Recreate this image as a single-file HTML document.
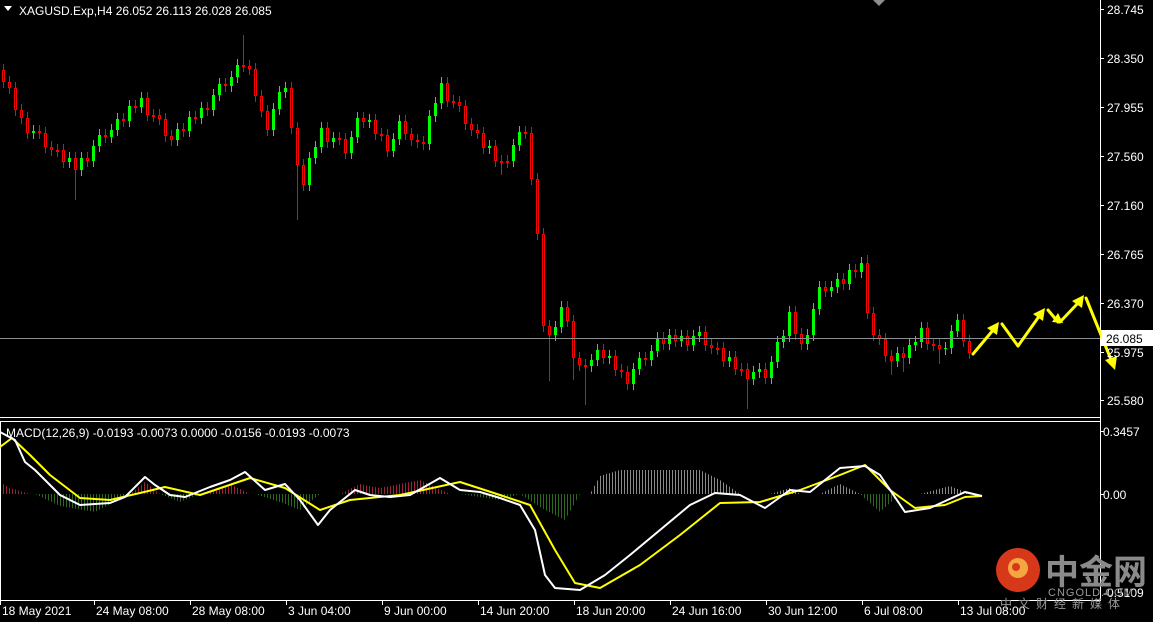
<!DOCTYPE html>
<html><head><meta charset="utf-8"><style>
html,body{margin:0;padding:0;background:#000;width:1153px;height:622px;overflow:hidden}
svg{display:block}
text{font-family:"Liberation Sans",sans-serif;font-size:12px;fill:#fff}
</style></head><body>
<svg width="1153" height="622" viewBox="0 0 1153 622" xmlns="http://www.w3.org/2000/svg">
<defs>
<pattern id="pr" width="3" height="10" patternUnits="userSpaceOnUse"><rect width="1" height="10" fill="#a0223a"/></pattern>
<pattern id="pg" width="3" height="10" patternUnits="userSpaceOnUse"><rect width="1" height="10" fill="#2a6a1a"/></pattern>
<pattern id="pw" width="3" height="10" patternUnits="userSpaceOnUse"><rect width="1" height="10" fill="#8a8a8a"/></pattern>
</defs>
<rect width="1153" height="622" fill="#000"/>
<!-- histogram -->
<g>
<polygon fill="url(#pr)" points="3,494 3,484 10,488 30,494"/>
<polygon fill="url(#pr)" points="130,494 145,482 160,494"/>
<polygon fill="url(#pr)" points="200,494 230,484 250,494"/>
<polygon fill="url(#pr)" points="340,494 360,484 380,488 420,480 450,494"/>
<polygon fill="url(#pw)" points="590,494 600,476 620,470 700,470 720,480 740,494"/>
<polygon fill="url(#pw)" points="920,494 950,486 970,494"/>
<polygon fill="url(#pw)" points="770,494 790,488 800,494"/>
<polygon fill="url(#pw)" points="820,494 840,484 860,494"/>
<polygon fill="url(#pg)" points="35,494 60,506 95,512 130,494"/>
<polygon fill="url(#pg)" points="160,494 180,502 200,494"/>
<polygon fill="url(#pg)" points="255,494 280,502 300,510 320,494"/>
<polygon fill="url(#pg)" points="460,494 500,500 520,494"/>
<polygon fill="url(#pg)" points="520,494 545,510 565,520 580,494"/>
<polygon fill="url(#pg)" points="860,494 880,512 900,494"/>
</g>
<!-- green candles -->
<path stroke="#00ff00" stroke-width="1" fill="none" d="M33.5 125V139M69.5 152V168M81.5 152V176M93.5 140V167M99.5 129V152M111.5 124V143M117.5 113V136M129.5 100V127M141.5 92V113M177.5 123V146M189.5 111V137M201.5 102V124M213.5 89V116M219.5 78V101M231.5 71V92M237.5 59V83M273.5 103V136M279.5 86V115M285.5 82V98M309.5 152V191M315.5 141V164M321.5 122V153M333.5 132V148M351.5 131V159M357.5 112V143M369.5 114V128M393.5 133V157M399.5 115V145M429.5 110V150M435.5 97V122M441.5 77V109M489.5 140V154M513.5 139V167M519.5 126V151M555.5 321V341M561.5 301V333M591.5 354V372M597.5 344V366M609.5 350V364M633.5 363V390M639.5 352V375M651.5 345V366M657.5 332V357M669.5 329V350M681.5 330V347M693.5 330V351M699.5 326V342M729.5 351V367M753.5 366V385M759.5 363V378M771.5 356V384M777.5 336V368M783.5 330V348M789.5 306V342M807.5 329V350M813.5 303V341M819.5 281V315M831.5 281V297M837.5 273V293M849.5 264V290M861.5 257V278M897.5 347V367M909.5 339V364M915.5 336V351M921.5 322V348M945.5 342V355M951.5 325V354M957.5 314V337"/>
<path fill="#00ff00" d="M32 131h3v2h-3zM68 158h3v4h-3zM80 158h3v12h-3zM92 146h3v15h-3zM98 135h3v11h-3zM110 130h3v7h-3zM116 119h3v11h-3zM128 106h3v15h-3zM140 98h3v9h-3zM176 129h3v11h-3zM188 117h3v14h-3zM200 108h3v10h-3zM212 95h3v15h-3zM218 84h3v11h-3zM230 77h3v9h-3zM236 65h3v12h-3zM272 109h3v21h-3zM278 92h3v17h-3zM284 88h3v4h-3zM308 158h3v27h-3zM314 147h3v11h-3zM320 128h3v19h-3zM332 138h3v4h-3zM350 137h3v16h-3zM356 118h3v19h-3zM368 120h3v2h-3zM392 139h3v12h-3zM398 121h3v18h-3zM428 116h3v28h-3zM434 103h3v13h-3zM440 83h3v20h-3zM488 146h3v2h-3zM512 145h3v16h-3zM518 132h3v13h-3zM554 327h3v8h-3zM560 307h3v20h-3zM590 360h3v6h-3zM596 350h3v10h-3zM608 356h3v2h-3zM632 369h3v15h-3zM638 358h3v11h-3zM650 351h3v9h-3zM656 338h3v13h-3zM668 335h3v9h-3zM680 336h3v5h-3zM692 336h3v9h-3zM698 332h3v4h-3zM728 357h3v4h-3zM752 372h3v7h-3zM758 369h3v3h-3zM770 362h3v16h-3zM776 342h3v20h-3zM782 336h3v6h-3zM788 312h3v24h-3zM806 335h3v9h-3zM812 309h3v26h-3zM818 287h3v22h-3zM830 287h3v4h-3zM836 279h3v8h-3zM848 270h3v14h-3zM860 263h3v9h-3zM896 353h3v8h-3zM908 345h3v13h-3zM914 342h3v3h-3zM920 328h3v14h-3zM944 348h3v1h-3zM950 331h3v17h-3zM956 320h3v11h-3z"/>
<!-- red candles -->
<path stroke="#ff0000" stroke-width="1" fill="none" d="M3.5 64V88M9.5 76V94M15.5 82V116M21.5 104V124M27.5 112V139M39.5 125V139M45.5 127V153M51.5 141V156M57.5 144V157M63.5 144V168M75.5 152V200M87.5 152V167M105.5 129V143M123.5 113V127M135.5 100V113M147.5 92V121M153.5 109V122M159.5 109V125M165.5 113V142M171.5 130V146M183.5 123V137M195.5 111V124M207.5 102V116M225.5 78V92M243.5 35V72M249.5 60V75M255.5 63V102M261.5 90V117M267.5 105V136M291.5 82V134M297.5 122V220M303.5 159V191M327.5 122V148M339.5 132V145M345.5 133V159M363.5 112V128M375.5 114V140M381.5 128V141M387.5 129V157M405.5 115V140M411.5 128V146M417.5 134V148M423.5 136V150M447.5 77V107M453.5 95V108M459.5 96V112M465.5 100V130M471.5 118V136M477.5 124V139M483.5 127V154M495.5 140V167M501.5 155V175M507.5 155V168M525.5 126V139M531.5 127V185M537.5 173V240M543.5 228V332M549.5 320V381M567.5 301V327M573.5 315V380M579.5 352V371M585.5 359V405M603.5 344V364M615.5 350V376M621.5 364V378M627.5 366V390M645.5 352V366M663.5 332V350M675.5 329V347M687.5 330V351M705.5 326V351M711.5 339V354M717.5 342V355M723.5 342V367M735.5 351V375M741.5 363V376M747.5 363V409M765.5 363V384M795.5 306V340M801.5 328V350M825.5 281V297M843.5 273V290M855.5 264V278M867.5 255V319M873.5 307V341M879.5 329V345M885.5 333V362M891.5 350V375M903.5 347V372M927.5 322V350M933.5 338V351M939.5 339V364M963.5 314V347M969.5 335V359"/>
<path stroke="#ff0000" stroke-width="1" fill="#000" d="M2.5 70.5h2v11h-2zM8.5 82.5h2v5h-2zM14.5 88.5h2v21h-2zM20.5 110.5h2v7h-2zM26.5 118.5h2v14h-2zM38.5 131.5h2v1h-2zM44.5 133.5h2v13h-2zM50.5 147.5h2v2h-2zM56.5 150.5h2v1h-2zM62.5 150.5h2v11h-2zM74.5 158.5h2v11h-2zM86.5 158.5h2v2h-2zM104.5 135.5h2v1h-2zM122.5 119.5h2v1h-2zM134.5 106.5h2v1h-2zM146.5 98.5h2v16h-2zM152.5 115.5h2v1h-2zM158.5 115.5h2v3h-2zM164.5 119.5h2v16h-2zM170.5 136.5h2v3h-2zM182.5 129.5h2v1h-2zM194.5 117.5h2v1h-2zM206.5 108.5h2v1h-2zM224.5 84.5h2v1h-2zM242.5 65.5h2v1h-2zM248.5 66.5h2v2h-2zM254.5 69.5h2v26h-2zM260.5 96.5h2v14h-2zM266.5 111.5h2v18h-2zM290.5 88.5h2v39h-2zM296.5 128.5h2v36h-2zM302.5 165.5h2v19h-2zM326.5 128.5h2v13h-2zM338.5 138.5h2v1h-2zM344.5 139.5h2v13h-2zM362.5 118.5h2v3h-2zM374.5 120.5h2v13h-2zM380.5 134.5h2v1h-2zM386.5 135.5h2v15h-2zM404.5 121.5h2v12h-2zM410.5 134.5h2v5h-2zM416.5 140.5h2v1h-2zM422.5 142.5h2v1h-2zM446.5 83.5h2v17h-2zM452.5 101.5h2v1h-2zM458.5 102.5h2v3h-2zM464.5 106.5h2v17h-2zM470.5 124.5h2v5h-2zM476.5 130.5h2v2h-2zM482.5 133.5h2v14h-2zM494.5 146.5h2v14h-2zM500.5 161.5h2v1h-2zM506.5 161.5h2v1h-2zM524.5 132.5h2v1h-2zM530.5 133.5h2v45h-2zM536.5 179.5h2v54h-2zM542.5 234.5h2v91h-2zM548.5 326.5h2v8h-2zM566.5 307.5h2v13h-2zM572.5 321.5h2v36h-2zM578.5 358.5h2v6h-2zM584.5 365.5h2v1h-2zM602.5 350.5h2v7h-2zM614.5 356.5h2v13h-2zM620.5 370.5h2v1h-2zM626.5 372.5h2v11h-2zM644.5 358.5h2v1h-2zM662.5 338.5h2v5h-2zM674.5 335.5h2v5h-2zM686.5 336.5h2v8h-2zM704.5 332.5h2v12h-2zM710.5 345.5h2v2h-2zM716.5 348.5h2v1h-2zM722.5 348.5h2v12h-2zM734.5 357.5h2v11h-2zM740.5 369.5h2v1h-2zM746.5 369.5h2v9h-2zM764.5 369.5h2v8h-2zM794.5 312.5h2v21h-2zM800.5 334.5h2v9h-2zM824.5 287.5h2v3h-2zM842.5 279.5h2v4h-2zM854.5 270.5h2v1h-2zM866.5 263.5h2v49h-2zM872.5 313.5h2v21h-2zM878.5 335.5h2v3h-2zM884.5 339.5h2v16h-2zM890.5 356.5h2v4h-2zM902.5 353.5h2v4h-2zM926.5 328.5h2v15h-2zM932.5 344.5h2v1h-2zM938.5 345.5h2v3h-2zM962.5 320.5h2v20h-2zM968.5 341.5h2v11h-2z"/>
<line x1="0" y1="338.5" x2="1100" y2="338.5" stroke="#8a8f94"/>
<!-- frames -->
<line x1="1100.5" y1="0" x2="1100.5" y2="601" stroke="#fff"/>
<line x1="0" y1="417.5" x2="1100" y2="417.5" stroke="#fff"/>
<line x1="0" y1="421.5" x2="1100" y2="421.5" stroke="#fff"/>
<line x1="0" y1="600.5" x2="1100" y2="600.5" stroke="#fff"/>
<line x1="0.5" y1="421" x2="0.5" y2="601" stroke="#fff"/>
<polygon points="873,0 885,0 879,6" fill="#8a8f94"/>
<!-- MACD lines -->
<polyline fill="none" stroke="#ffff00" stroke-width="2" stroke-linejoin="round" points="0,447 12,438 30,455 50,475 80,498 110,500 140,493 165,487 200,495 250,478 285,488 320,510 350,500 400,495 460,482 500,495 530,505 555,550 575,583 600,588 640,565 680,535 720,503 760,502 800,490 840,475 865,465 890,490 915,508 945,505 965,497 982,496"/>
<polyline fill="none" stroke="#fff" stroke-width="2" stroke-linejoin="round" points="0,432 15,440 25,462 35,470 60,495 80,505 110,503 125,497 145,477 155,485 170,495 185,497 210,487 230,480 245,472 265,490 285,484 300,500 318,525 330,510 355,490 370,495 390,497 410,495 440,478 460,490 480,492 500,498 520,505 535,530 545,575 555,588 580,590 605,575 630,555 660,530 690,505 715,493 740,495 765,508 790,490 810,492 840,468 865,466 880,475 905,512 930,508 965,492 982,496"/>
<!-- arrows -->
<g stroke="#ffff00" stroke-width="3" fill="#ffff00" stroke-linecap="round">
<line x1="973" y1="354" x2="994" y2="329"/><polygon points="999,322 987,328 997,335" stroke="none"/>
<line x1="1002" y1="324" x2="1018" y2="346"/>
<line x1="1018" y1="346" x2="1040" y2="315"/><polygon points="1045,308 1033,314 1043,321" stroke="none"/>
<line x1="1048" y1="310" x2="1058" y2="322"/><polygon points="1063,323 1052,322 1058,313" stroke="none"/>
<line x1="1060" y1="322" x2="1079" y2="302"/><polygon points="1084,295 1072,301 1082,308" stroke="none"/>
<line x1="1086" y1="298" x2="1112" y2="362"/><polygon points="1115,370 1105,360 1117,356" stroke="none"/>
</g>
<rect x="1101" y="330" width="52" height="16" fill="#fff"/>
<text x="1106" y="343" style="fill:#000">26.085</text>
<g stroke="#fff">
<line x1="1101" x2="1104" y1="9.5" y2="9.5"/><line x1="1101" x2="1104" y1="58.5" y2="58.5"/><line x1="1101" x2="1104" y1="107.5" y2="107.5"/><line x1="1101" x2="1104" y1="156.5" y2="156.5"/><line x1="1101" x2="1104" y1="205.5" y2="205.5"/><line x1="1101" x2="1104" y1="254.5" y2="254.5"/><line x1="1101" x2="1104" y1="303.5" y2="303.5"/><line x1="1101" x2="1104" y1="352.5" y2="352.5"/><line x1="1101" x2="1104" y1="400.5" y2="400.5"/><line x1="1101" x2="1104" y1="431.5" y2="431.5"/><line x1="1101" x2="1104" y1="494.5" y2="494.5"/>
<line x1="0.5" x2="0.5" y1="601" y2="605"/><line x1="94.5" x2="94.5" y1="601" y2="605"/><line x1="190.5" x2="190.5" y1="601" y2="605"/><line x1="286.5" x2="286.5" y1="601" y2="605"/><line x1="382.5" x2="382.5" y1="601" y2="605"/><line x1="478.5" x2="478.5" y1="601" y2="605"/><line x1="574.5" x2="574.5" y1="601" y2="605"/><line x1="670.5" x2="670.5" y1="601" y2="605"/><line x1="766.5" x2="766.5" y1="601" y2="605"/><line x1="862.5" x2="862.5" y1="601" y2="605"/><line x1="958.5" x2="958.5" y1="601" y2="605"/>
</g>
<text x="1107" y="14">28.745</text><text x="1107" y="63">28.350</text><text x="1107" y="112">27.955</text>
<text x="1107" y="161">27.560</text><text x="1107" y="210">27.160</text><text x="1107" y="259">26.765</text>
<text x="1107" y="308">26.370</text><text x="1107" y="357">25.975</text><text x="1107" y="405">25.580</text>
<text x="1103" y="436">0.3457</text><text x="1103" y="499">0.00</text><text x="1103" y="597">-0.5109</text>
<polygon points="4,6 12,6 8,11" fill="#fff"/>
<text x="19" y="15">XAGUSD.Exp,H4  26.052 26.113 26.028 26.085</text>
<text x="6" y="437">MACD(12,26,9) -0.0193 -0.0073 0.0000 -0.0156 -0.0193 -0.0073</text>
<text x="2" y="615">18 May 2021</text><text x="96" y="615">24 May 08:00</text><text x="192" y="615">28 May 08:00</text>
<text x="288" y="615">3 Jun 04:00</text><text x="384" y="615">9 Jun 00:00</text><text x="480" y="615">14 Jun 20:00</text>
<text x="576" y="615">18 Jun 20:00</text><text x="672" y="615">24 Jun 16:00</text><text x="768" y="615">30 Jun 12:00</text>
<text x="864" y="615">6 Jul 08:00</text><text x="960" y="615">13 Jul 08:00</text>
<!-- watermark -->
<circle cx="1018" cy="570" r="22" fill="#d8381a"/>
<circle cx="1018" cy="568" r="10" fill="#f4a640"/>
<circle cx="1016" cy="567" r="4" fill="#d8381a"/>
<text x="1045" y="584" style="font-family:'Noto Sans CJK SC',sans-serif;font-size:34px;font-weight:bold;fill:#8a8a8a">中金网</text>
<text x="1048" y="596" style="font-size:11px;fill:#9a9a9a;letter-spacing:1px">CNGOLD.COM</text>
<text x="1000" y="608" style="font-family:'Noto Sans CJK SC',sans-serif;font-size:12px;fill:#9a9a9a;letter-spacing:6px">中文财经新媒体</text>
</svg>
</body></html>
